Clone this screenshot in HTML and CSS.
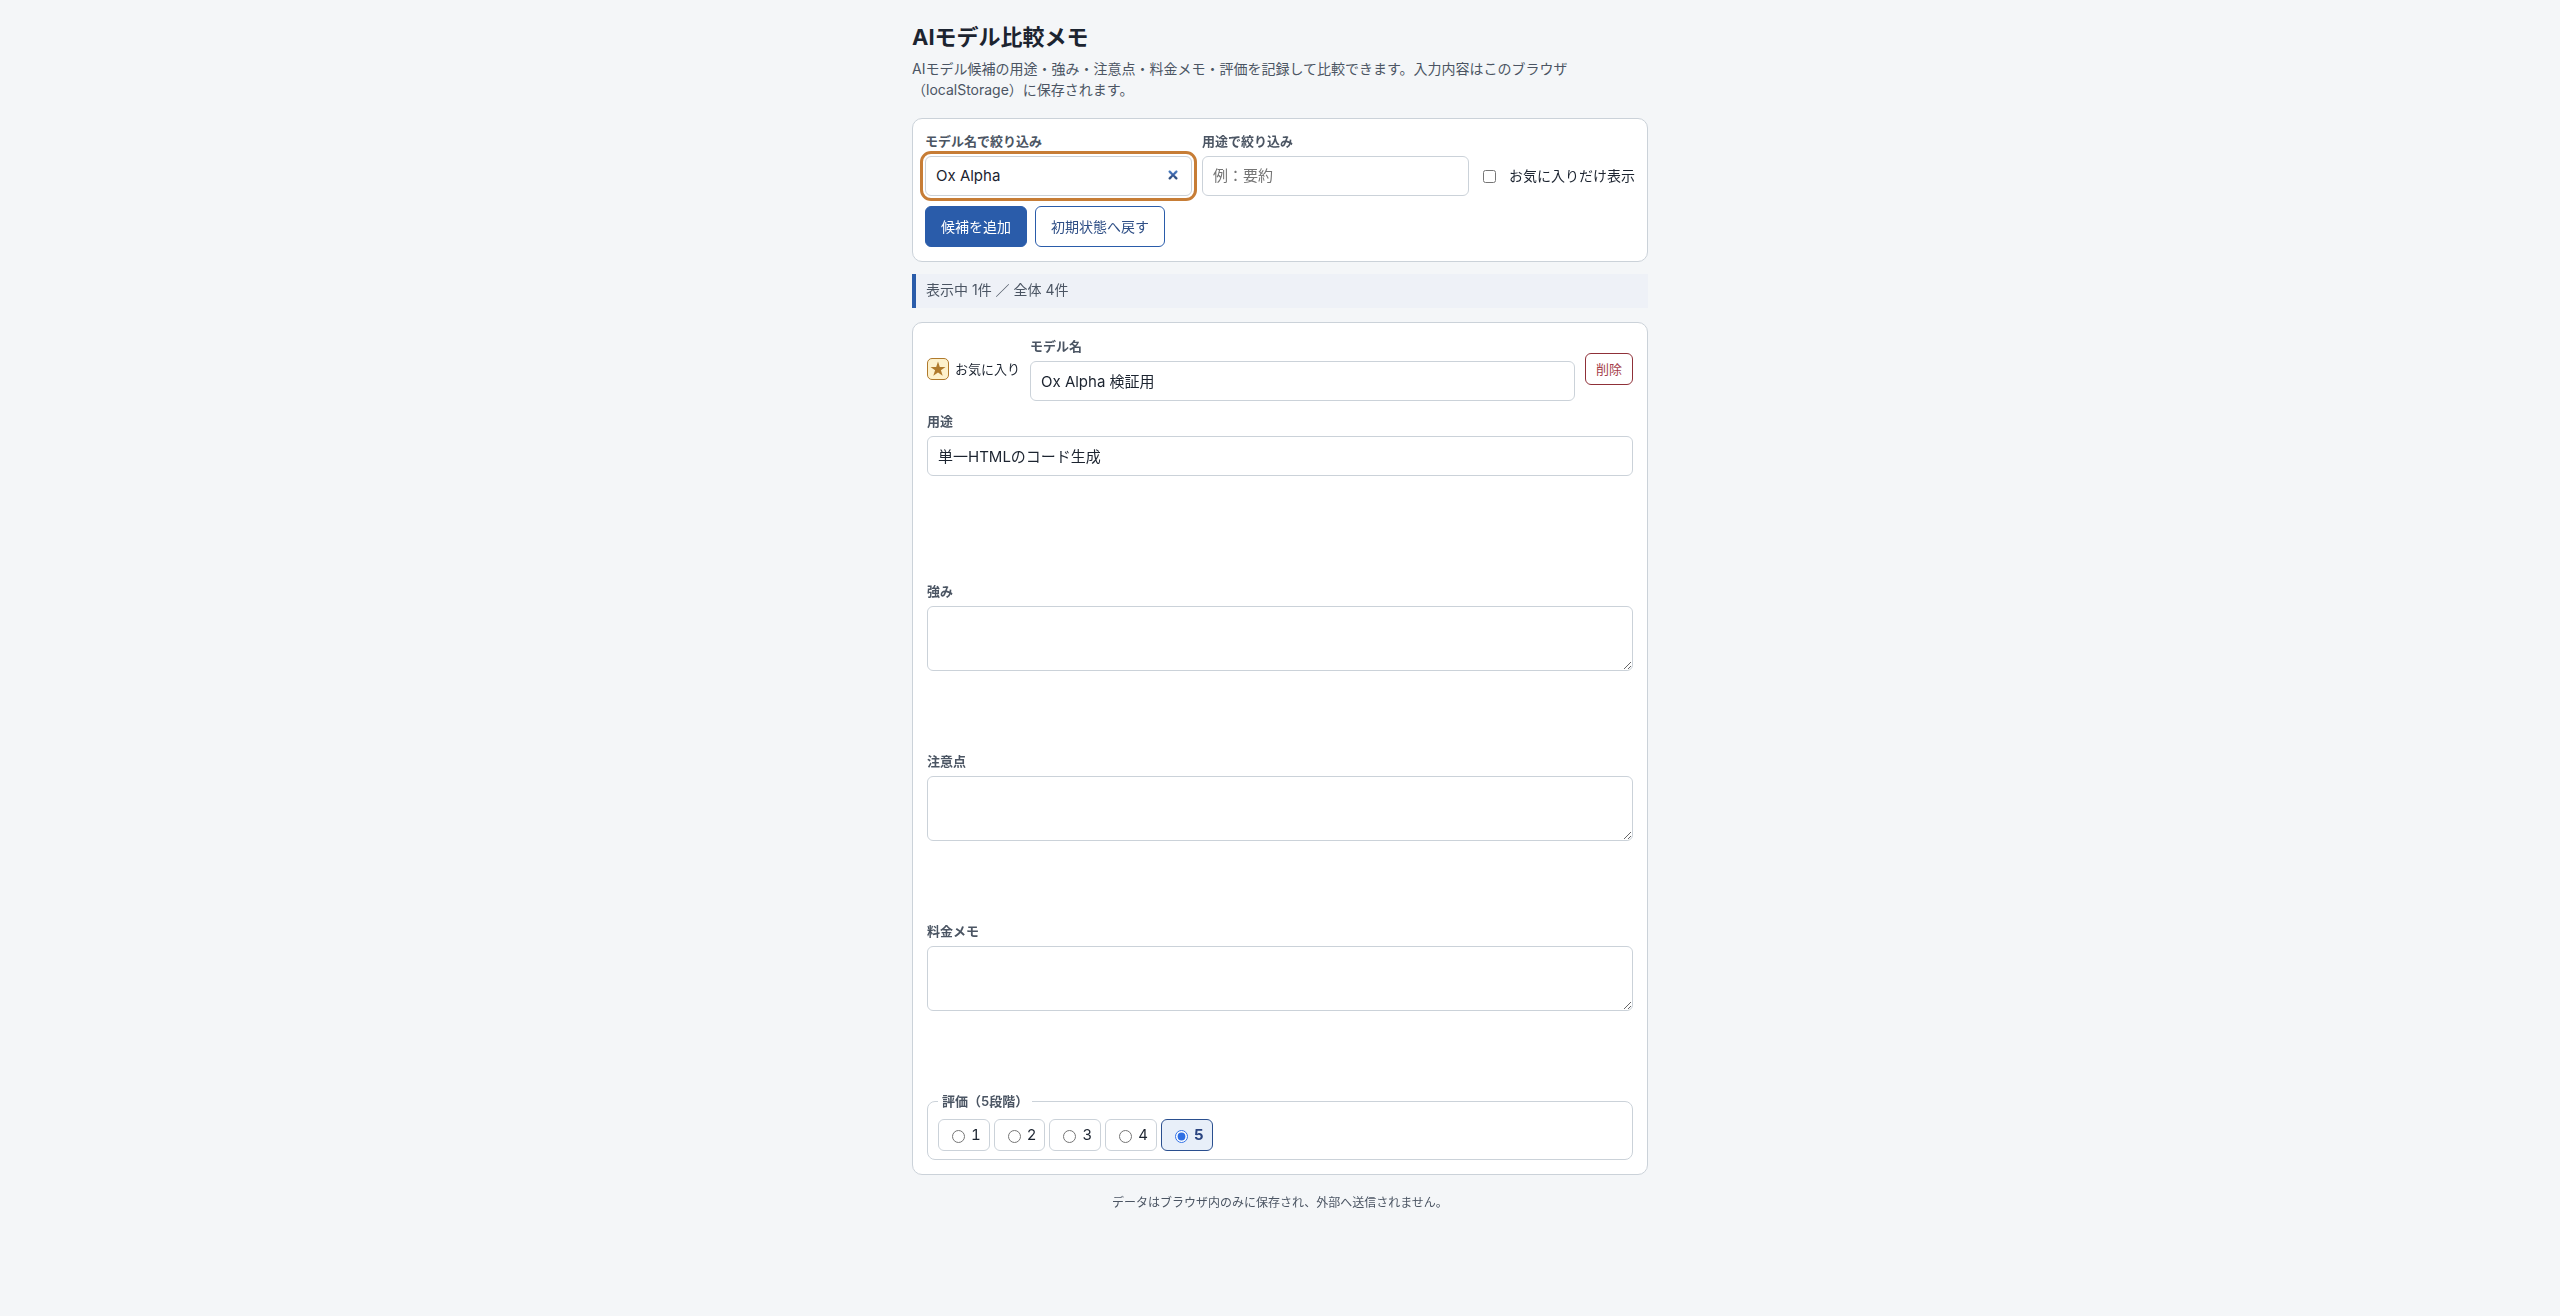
FILE: index.html
```html
<!DOCTYPE html>
<html lang="ja">
<head>
  <meta charset="UTF-8">
  <title>AIモデル比較メモ</title>
  <meta name="viewport" content="width=device-width, initial-scale=1.0">
  <link rel="stylesheet" href="styles.css">
</head>
<body>
  <div class="container">
    <header>
      <h1>AIモデル比較メモ</h1>
      <p class="lead">AIモデル候補の用途・強み・注意点・料金メモ・評価を記録して比較できます。入力内容はこのブラウザ（localStorage）に保存されます。</p>
    </header>

    <main>
      <section class="toolbar">
        <div class="filter">
          <label for="filter-name">モデル名で絞り込み</label>
          <input type="search" id="filter-name" value="Ox Alpha" autocomplete="off" autofocus>
        </div>
        <div class="filter">
          <label for="filter-use">用途で絞り込み</label>
          <input type="search" id="filter-use" placeholder="例：要約" autocomplete="off">
        </div>
        <label class="check"><input type="checkbox" id="filter-fav">お気に入りだけ表示</label>
        <div class="actions">
          <button type="button" id="add-button" class="primary">候補を追加</button>
          <button type="button" id="reset-button">初期状態へ戻す</button>
        </div>
      </section>

      <p class="status" role="status">表示中 1件 ／ 全体 4件</p>

      <article class="card">
        <div class="card-head">
          <div class="fav">
            <button type="button" id="fav-button" class="star" aria-pressed="true">
              <svg viewBox="0 0 16 16" width="16" height="16" aria-hidden="true">
                <path d="M8 0.5l1.8 5.4h5.7l-4.6 3.3 1.8 5.5L8 11.4l-4.7 3.3 1.8-5.5L0.5 5.9h5.7z"/>
              </svg>
            </button>
            <label for="fav-button">お気に入り</label>
          </div>
          <div class="name">
            <label for="model-name">モデル名</label>
            <input type="text" id="model-name" value="Ox Alpha 検証用">
          </div>
          <button type="button" class="delete">削除</button>
        </div>

        <div class="field">
          <label for="use">用途</label>
          <input type="text" id="use" value="単一HTMLのコード生成">
        </div>
        <div class="field">
          <label for="strength">強み</label>
          <textarea id="strength"></textarea>
        </div>
        <div class="field">
          <label for="caution">注意点</label>
          <textarea id="caution"></textarea>
        </div>
        <div class="field">
          <label for="price">料金メモ</label>
          <textarea id="price"></textarea>
        </div>

        <fieldset>
          <legend>評価（5段階）</legend>
          <div class="rating">
            <label><input type="radio" name="rating" value="1">1</label>
            <label><input type="radio" name="rating" value="2">2</label>
            <label><input type="radio" name="rating" value="3">3</label>
            <label><input type="radio" name="rating" value="4">4</label>
            <label><input type="radio" name="rating" value="5" checked>5</label>
          </div>
        </fieldset>
      </article>
    </main>

    <footer>データはブラウザ内のみに保存され、外部へ送信されません。</footer>
  </div>

  <script>
    const filterName = document.getElementById('filter-name');
    filterName.focus();
    filterName.setSelectionRange(filterName.value.length, filterName.value.length);
  </script>
</body>
</html>
```
FILE: styles.css
```css
* {
  box-sizing: border-box;
}

body {
  margin: 0;
  background: #f4f6f8;
  color: #1c2430;
  font-family: Inter, "Noto Sans CJK JP", sans-serif;
  font-size: 15px;
  line-height: 24px;
}

.container {
  max-width: 760px;
  margin: 0 auto;
  padding: 20px 12px 40px;
}

h1 {
  margin: 0 0 4px;
  font-size: 22px;
  line-height: 34px;
}

.lead {
  margin: 0 0 18px;
  color: #4b5563;
  font-size: 14px;
  line-height: 21px;
}

label,
legend {
  color: #4b5563;
  font-size: 13px;
  font-weight: 600;
  line-height: 20px;
}

input,
textarea,
button {
  font: inherit;
}

input[type="text"],
input[type="search"],
textarea {
  display: block;
  width: 100%;
  height: 40px;
  padding: 7px 10px 9px;
  border: 1px solid #cbd2d9;
  border-radius: 6px;
  background: #ffffff;
  color: #1c2430;
  line-height: 22px;
}

textarea {
  height: 65px;
  resize: vertical;
}

input:focus {
  outline: 3px solid #c77d36;
  outline-offset: 2px;
}

button {
  border: 1px solid #2a5caa;
  border-radius: 6px;
  background: #ffffff;
  color: #2f4f86;
  cursor: pointer;
}

/* filters */
.toolbar {
  display: flex;
  flex-wrap: wrap;
  align-items: flex-end;
  gap: 10px;
  padding: 12px 12px 14px;
  border: 1px solid #cbd2d9;
  border-radius: 10px;
  background: #ffffff;
}

.filter {
  flex: 1 1 200px;
}

.filter label,
.name label,
.field label {
  display: block;
  margin-bottom: 5px;
}

.check {
  display: flex;
  align-items: center;
  gap: 10px;
  height: 40px;
  color: #1c2430;
  font-size: 14px;
  font-weight: 400;
}

.actions {
  display: flex;
  flex-basis: 100%;
  gap: 8px;
}

.actions button {
  height: 41px;
  padding: 0 15px;
  font-size: 14px;
}

.actions .primary {
  background: #2a5caa;
  color: #ffffff;
}

.status {
  margin: 12px 0 14px;
  padding: 5px 10px 7px;
  border-left: 4px solid #2a5caa;
  background: #eef1f7;
  color: #4b5563;
  font-size: 14px;
  line-height: 22px;
}

/* model card */
.card {
  display: flex;
  flex-direction: column;
  gap: 10px;
  padding: 13px 14px 14px;
  border: 1px solid #cbd2d9;
  border-radius: 10px;
  background: #ffffff;
}

.card-head {
  display: flex;
  align-items: center;
  gap: 10px;
}

.fav {
  display: flex;
  align-items: center;
  gap: 6px;
}

.fav label {
  color: #1c2430;
  font-weight: 400;
}

.star {
  display: flex;
  align-items: center;
  justify-content: center;
  width: 22px;
  height: 22px;
  padding: 0;
  border-color: #b07a2c;
  border-radius: 5px;
  background: #fdf1cc;
}

.star svg {
  fill: #b07a2c;
}

.name {
  flex: 1;
}

.delete {
  height: 32px;
  padding: 0 10px;
  border-color: #8f3038;
  color: #a5404a;
  font-size: 13px;
}

.field {
  flex: 0 0 160px;
}

fieldset {
  margin: 0;
  padding: 8px 10px;
  border: 1px solid #cbd2d9;
  border-radius: 8px;
}

legend {
  padding: 0 4px;
}

.rating {
  display: flex;
  gap: 4px;
}

.rating label {
  display: flex;
  align-items: center;
  gap: 3px;
  height: 32px;
  padding: 0 8px;
  border: 1px solid #cbd2d9;
  border-radius: 6px;
  color: #1c2430;
  font-size: 15px;
  font-weight: 400;
  font-variant-numeric: tabular-nums;
}

.rating label:has(:checked) {
  border-color: #2a4f8f;
  background: #e8eff9;
  color: #2a4480;
  font-weight: 700;
}

.rating input {
  accent-color: #2f6fe4;
}

footer {
  margin-top: 18px;
  color: #4b5563;
  font-size: 12px;
  line-height: 20px;
  text-align: center;
}
```
